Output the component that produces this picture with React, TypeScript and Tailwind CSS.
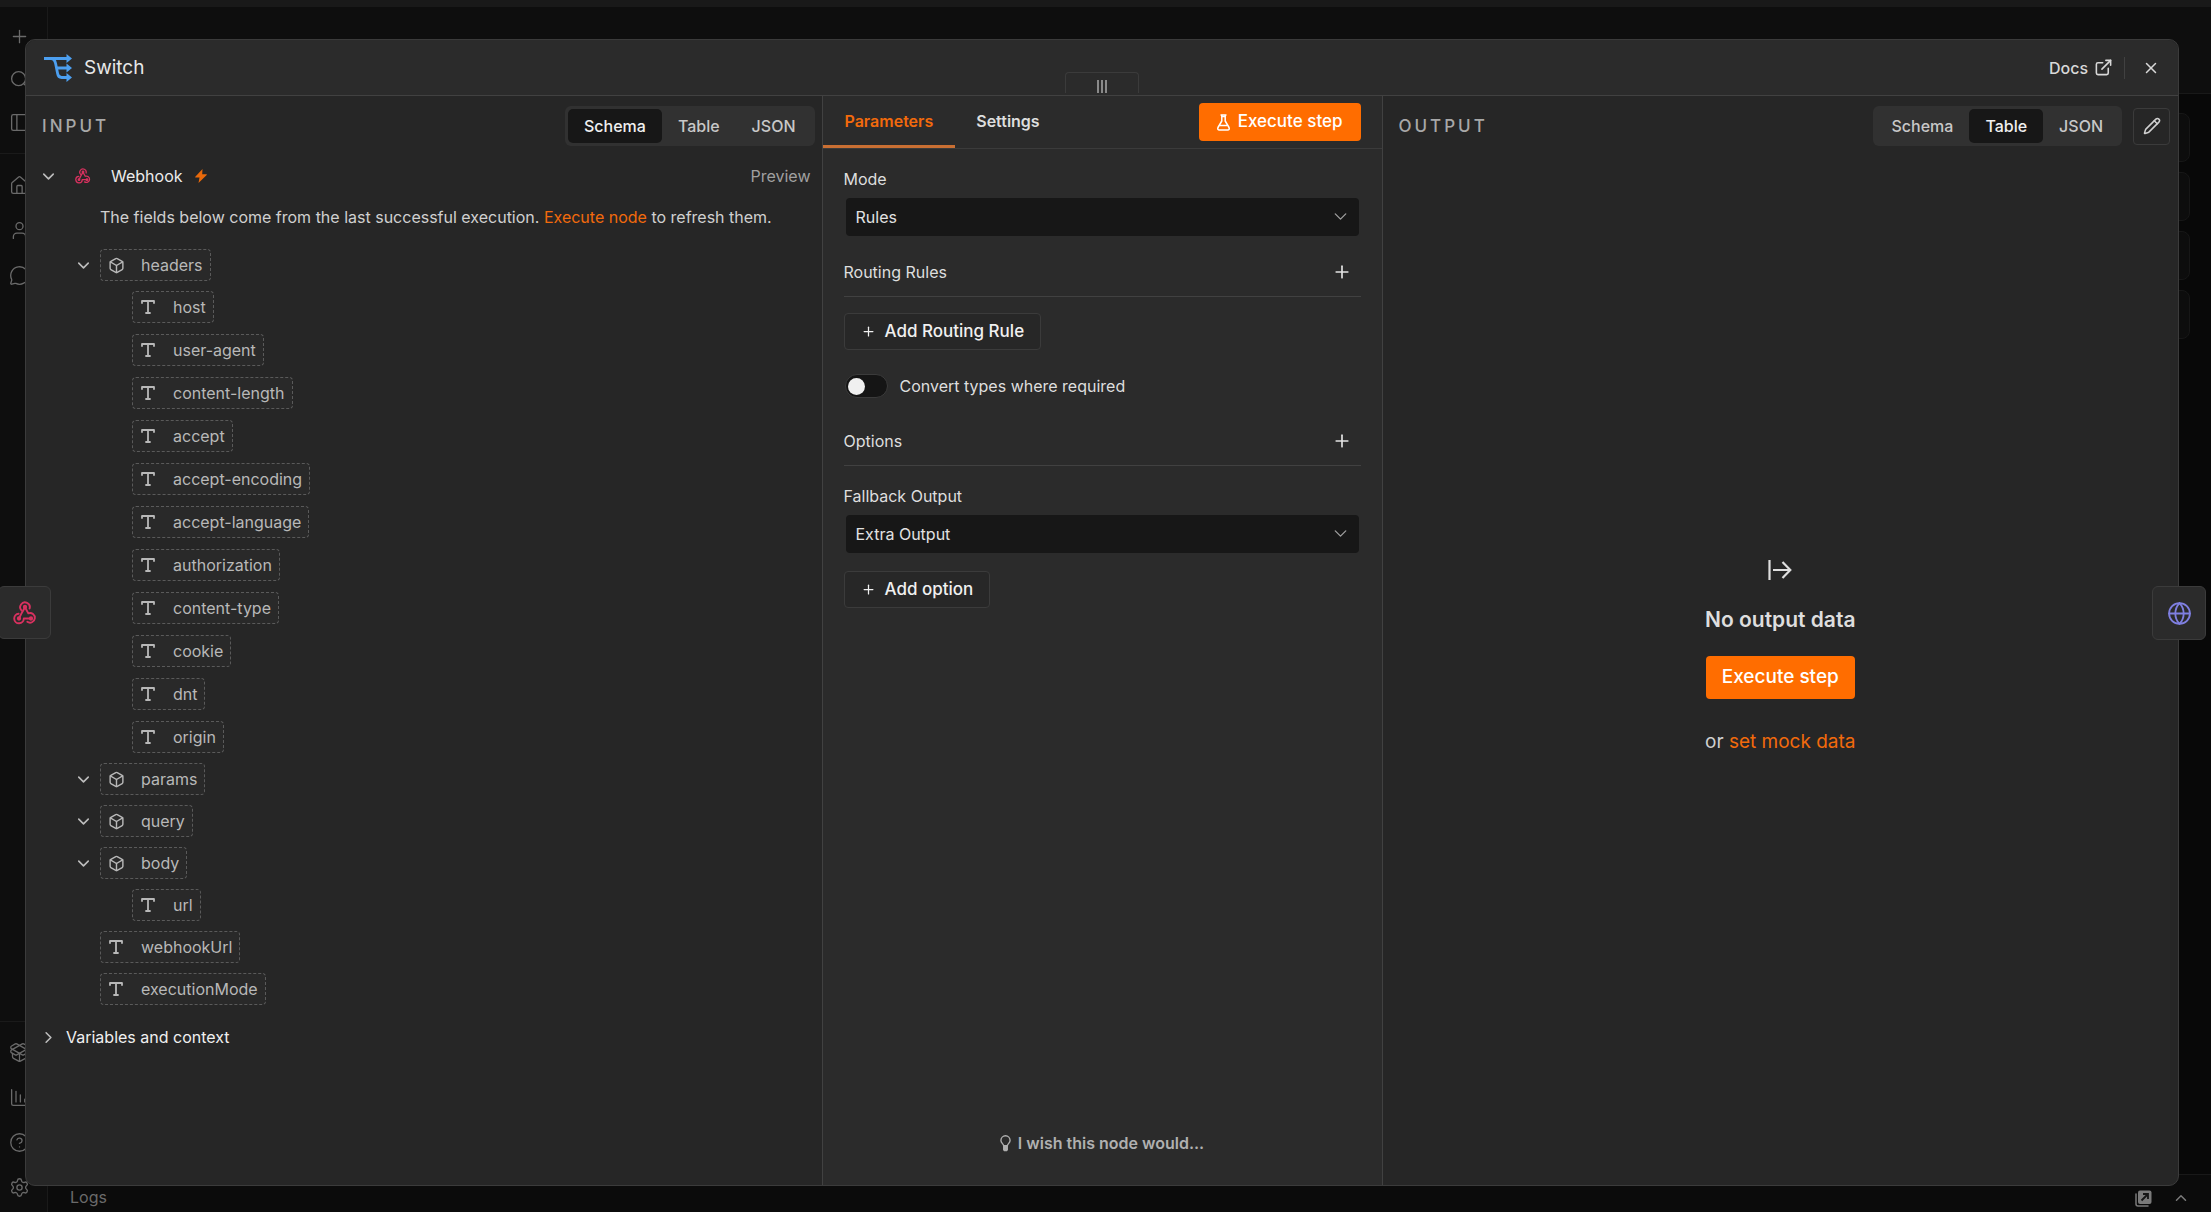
import { useState } from "react";
import type { ReactNode } from "react";
import {
  Box,
  ChartColumnDecreasing,
  ChevronDown,
  ChevronRight,
  ChevronUp,
  CircleQuestionMark,
  ExternalLink,
  Globe,
  House,
  MessageCircle,
  PackageOpen,
  PanelLeft,
  Pencil,
  Plus,
  Search,
  Settings,
  User,
  X,
} from "lucide-react";
import clsx from "clsx";

type View = "Schema" | "Table" | "JSON";

interface SchemaNode {
  name: string;
  type: "object" | "string";
  children?: SchemaNode[];
}

const HEADER_FIELDS = [
  "host",
  "user-agent",
  "content-length",
  "accept",
  "accept-encoding",
  "accept-language",
  "authorization",
  "content-type",
  "cookie",
  "dnt",
  "origin",
];

const SCHEMA: SchemaNode[] = [
  {
    name: "headers",
    type: "object",
    children: HEADER_FIELDS.map((name) => ({ name, type: "string" })),
  },
  { name: "params", type: "object" },
  { name: "query", type: "object" },
  { name: "body", type: "object", children: [{ name: "url", type: "string" }] },
  { name: "webhookUrl", type: "string" },
  { name: "executionMode", type: "string" },
];

function SwitchIcon() {
  return (
    <svg width="28" height="28" viewBox="0 0 28 28" fill="none" aria-hidden="true">
      <path
        d="M0 4.500H24M7 4.500c3 0 4 2 4.600 5l2 10c.5 3 1.500 4 4 4H24M12 14H24"
        stroke="#4c9ff0"
        strokeWidth="2.800"
      />
      <path
        d="M22.500 0 28 4.500 22.500 9zM22.500 9.500 28 14 22.500 18.500zM22.500 19 28 23.500 22.500 28z"
        fill="#4c9ff0"
      />
    </svg>
  );
}

function WebhookIcon({ size }: { size: number }) {
  return (
    <svg
      width={size}
      height={size}
      viewBox="0 0 24 24"
      fill="none"
      stroke="#d8315f"
      strokeWidth="1.900"
      strokeLinecap="round"
      strokeLinejoin="round"
      aria-hidden="true"
    >
      <path d="M8.600 9.600A4.800 4.800 0 1 1 16.600 7.500" />
      <path d="M12 6.200 15.300 12.400A4.800 4.800 0 1 1 14.300 20.800" />
      <path d="M12 6.200 8.600 12.200 6 17.500" />
      <path d="M5.600 12.700A4.800 4.800 0 1 0 10.800 17.500H18" />
      <circle cx="12" cy="6" r="1.200" fill="#d8315f" />
      <circle cx="6" cy="17.500" r="1.200" fill="#d8315f" />
      <circle cx="18" cy="17.500" r="1.200" fill="#d8315f" />
    </svg>
  );
}

function BoltIcon() {
  return (
    <svg width="12" height="14" viewBox="0 0 12 14" fill="#e8690b" aria-hidden="true">
      <path d="M7.500 0 0.300 7.800c-.3.400-.1.800.4.800h3.800L3.500 14l8.200-7.900c.3-.4.100-.8-.4-.8H7.200z" />
    </svg>
  );
}

function FlaskIcon() {
  return (
    <svg
      width="13"
      height="17"
      viewBox="0 0 13 17"
      fill="none"
      stroke="currentColor"
      strokeWidth="1.500"
      strokeLinejoin="round"
      aria-hidden="true"
    >
      <path d="M3.500 1h6M4.800 1v6L1 13.500C.4 15 1 16 2.300 16h8.400c1.300 0 1.900-1 1.300-2.500L8.200 7V1" />
      <path d="M4.800 2.500h3.400M3 11.500h7" />
    </svg>
  );
}

function BulbIcon() {
  return (
    <svg width="11" height="17" viewBox="0 0 12 18" fill="none" aria-hidden="true">
      <path
        d="M4 11.500C4 9.500 1 8.500 1 5.600a5 5 0 0 1 10 0c0 2.900-3 3.900-3 5.900z"
        stroke="currentColor"
        strokeWidth="1.500"
      />
      <path d="M3.300 11.500h5.400v4.500L7.500 17.500h-3L3.300 16z" fill="currentColor" />
    </svg>
  );
}

function TextTypeIcon() {
  return (
    <svg
      width="14"
      height="14"
      viewBox="0 0 14 14"
      fill="none"
      stroke="currentColor"
      strokeWidth="1.800"
      strokeLinecap="round"
      strokeLinejoin="round"
      aria-hidden="true"
    >
      <path d="M1 3V1H13V3M7 1V13M5 13H9" />
    </svg>
  );
}

function OutputIcon() {
  return (
    <svg
      width="24"
      height="20"
      viewBox="0 0 24 20"
      fill="none"
      stroke="#dedede"
      strokeWidth="2.200"
      aria-hidden="true"
    >
      <path d="M1.500 0V20M5 10H22M14.500 2 22.300 10 14.500 18" />
    </svg>
  );
}

function PopOutIcon() {
  return (
    <svg width="17" height="17" viewBox="0 0 17 17" fill="none" aria-hidden="true">
      <path
        d="M1 4v10a2 2 0 0 0 2 2h10"
        stroke="currentColor"
        strokeWidth="1.500"
        strokeLinecap="round"
      />
      <rect x="3" y="0.500" width="13.500" height="13.500" rx="2" fill="currentColor" />
      <path d="M6.500 10.500 12.500 4.500M8 4H13V9" stroke="#161616" strokeWidth="1.800" />
    </svg>
  );
}

function ViewSwitch({ label, initial }: { label: string; initial: View }) {
  const [view, setView] = useState<View>(initial);
  const views: View[] = ["Schema", "Table", "JSON"];

  return (
    <div role="group" aria-label={label} className="flex h-10 rounded-md bg-[#313131] p-[3px]">
      {views.map((item) => (
        <button
          key={item}
          type="button"
          aria-pressed={item === view}
          onClick={() => setView(item)}
          className={clsx(
            "rounded-[5px] px-4 text-base font-medium",
            item === view ? "bg-[#171717] text-[#f0f0f0]" : "text-[#c8c8c8]"
          )}
        >
          {item}
        </button>
      ))}
    </div>
  );
}

function SchemaItem({ node }: { node: SchemaNode }) {
  const [open, setOpen] = useState(true);
  const isObject = node.type === "object";

  return (
    <li>
      <div className="flex items-center">
        {isObject && (
          <button
            type="button"
            aria-label={`Toggle ${node.name}`}
            aria-expanded={open}
            onClick={() => setOpen(!open)}
            className="-ml-[26px] flex w-[26px] text-[#bdbdbd]"
          >
            <ChevronDown size={19} />
          </button>
        )}
        <span className="flex h-8 items-center gap-[17px] rounded border border-dashed border-[#5a5a5a] bg-[#292929] px-[7px] text-base text-[#b8b8b8]">
          <span className="flex w-4 justify-center">
            {isObject ? <Box size={17} className="shrink-0" /> : <TextTypeIcon />}
          </span>
          {node.name}
        </span>
      </div>
      {open && node.children && (
        <ul className="mt-[10px] flex flex-col gap-[11px] pl-8">
          {node.children.map((child) => (
            <SchemaItem key={child.name} node={child} />
          ))}
        </ul>
      )}
    </li>
  );
}

function SelectField({ id, label, value }: { id: string; label: string; value: string }) {
  return (
    <div>
      <label htmlFor={id} className="block text-base leading-6 text-[#dedede]">
        {label}
      </label>
      <div className="relative mt-[7px] px-[2px]">
        <select
          id={id}
          defaultValue={value}
          className="block h-[38px] w-full appearance-none rounded bg-[#171717] pl-[10px] pr-9 text-base text-[#e2e2e2]"
        >
          <option>{value}</option>
        </select>
        <ChevronDown
          size={21}
          strokeWidth={1.5}
          className="pointer-events-none absolute top-2 right-[10px] text-[#a0a0a0]"
        />
      </div>
    </div>
  );
}

function SectionHeading({ title }: { title: string }) {
  return (
    <div className="flex items-center justify-between border-b border-[#414141] pb-3">
      <h3 className="text-base leading-6 text-[#dedede]">{title}</h3>
      <button type="button" aria-label={`Add to ${title}`} className="mr-[9px] text-[#e4e4e4]">
        <Plus size={20} />
      </button>
    </div>
  );
}

function AddButton({ children }: { children: ReactNode }) {
  return (
    <button
      type="button"
      className="flex h-[37px] items-center gap-[9px] rounded border border-[#3b3b3b] bg-[#272727] px-4 text-[17px] font-medium text-[#f0f0f0]"
    >
      <Plus size={15} />
      {children}
    </button>
  );
}

/** Editor chrome that stays dimmed behind the node dialog. */
function Backdrop() {
  return (
    <div className="flex h-full flex-col bg-[#0b0b0b] text-[#6a6a6a]">
      <div className="h-[7px] bg-[#191919]" />
      <div className="flex min-h-0 flex-1">
        <nav
          aria-label="Main"
          className="flex w-12 flex-col justify-between border-r border-[#1a1a1a] bg-[#0e0e0e]"
        >
          <div>
            <div className="flex flex-col gap-[22px] border-b border-[#1a1a1a] pt-[19px] pb-5 pl-[9px]">
              <Plus size={21} strokeWidth={1.5} />
              <Search size={21} strokeWidth={1.5} />
              <PanelLeft size={21} strokeWidth={1.5} />
            </div>
            <div className="flex flex-col gap-6 pt-[21px] pl-[9px]">
              <House size={21} strokeWidth={1.5} />
              <User size={21} strokeWidth={1.5} />
              <MessageCircle size={21} strokeWidth={1.5} />
            </div>
          </div>
          <div className="flex flex-col gap-6 border-t border-[#1a1a1a] pt-5 pb-[14px] pl-[9px]">
            <PackageOpen size={21} strokeWidth={1.5} />
            <ChartColumnDecreasing size={21} strokeWidth={1.5} />
            <CircleQuestionMark size={21} strokeWidth={1.5} />
            <Settings size={21} strokeWidth={1.5} />
          </div>
        </nav>
        <div className="flex min-w-0 flex-1 flex-col">
          <div className="h-[87px] border-b border-[#191919] bg-[#0e0e0e]" />
          <div className="flex flex-1 flex-col items-end gap-[10px] bg-[#080808] pt-[19px] pr-[21px]">
            {[1, 2, 3, 4].map((n) => (
              <div key={n} className="size-[49px] rounded-lg border border-[#171717] bg-[#0d0d0d]" />
            ))}
          </div>
          <div className="flex h-[38px] items-end justify-between border-t border-[#191919] pr-[21px] pb-[3px] pl-[22px]">
            <span className="text-base leading-6">Logs</span>
            <div className="flex items-center gap-5 pb-[2px] text-[#7a7a7a]">
              <PopOutIcon />
              <ChevronUp size={18} />
            </div>
          </div>
        </div>
      </div>
    </div>
  );
}

function InputPanel() {
  return (
    <section aria-label="Input" className="min-w-0 flex-1">
      <div className="flex items-center justify-between pt-[10px] pr-[7px] pl-4">
        <h2 className="pt-[2px] text-[17px] font-medium tracking-[3px] text-[#a8a8a8]">INPUT</h2>
        <ViewSwitch label="Input view" initial="Schema" />
      </div>

      <div className="mt-[18px] flex items-center pr-[11px] pl-[13px] text-[#bdbdbd]">
        <button type="button" aria-label="Toggle Webhook" className="flex w-9">
          <ChevronDown size={19} />
        </button>
        <WebhookIcon size={16} />
        <span className="ml-5 text-base leading-6 text-[#ececec]">Webhook</span>
        <span className="ml-3">
          <BoltIcon />
        </span>
        <span className="ml-auto text-base text-[#a0a0a0]">Preview</span>
      </div>

      <p className="mt-[17px] pl-[74px] text-base leading-6 text-[#d0d0d0]">
        The fields below come from the last successful execution.{" "}
        <a href="#execute" className="text-[#f26a0c]">
          Execute node
        </a>{" "}
        to refresh them.
      </p>

      <ul className="mt-5 flex flex-col gap-[10px] pl-[74px]">
        {SCHEMA.map((node) => (
          <SchemaItem key={node.name} node={node} />
        ))}
      </ul>

      <button
        type="button"
        className="mt-5 ml-[13px] flex items-center gap-2 text-base leading-6 text-[#f0f0f0]"
      >
        <ChevronRight size={19} className="text-[#bdbdbd]" />
        Variables and context
      </button>
    </section>
  );
}

function ParametersPanel() {
  const [convert, setConvert] = useState(false);

  return (
    <section
      aria-label="Parameters"
      className="relative flex w-[561px] shrink-0 flex-col border-x border-[#414141] bg-[#2b2b2b]"
    >
      {/* Drag handle */}
      <div className="absolute -top-6 left-1/2 flex h-[21px] w-[74px] -translate-x-1/2 items-end justify-center gap-[2px] rounded-t border border-b-0 border-[#3b3b3b]">
        <span className="h-[13px] w-[2px] bg-[#8a8a8a]" />
        <span className="h-[13px] w-[2px] bg-[#8a8a8a]" />
        <span className="h-[13px] w-[2px] bg-[#8a8a8a]" />
      </div>

      <div className="flex h-[53px] items-start justify-between border-b border-[#3b3b3b] pr-[21px] text-base font-semibold">
        <div className="flex">
          <button
            type="button"
            className="h-[52px] border-b-[3px] border-[#c96f33] px-[22px] text-[#f26a0c]"
          >
            Parameters
          </button>
          <button type="button" className="h-[52px] px-[21px] pb-[3px] text-[#dedede]">
            Settings
          </button>
        </div>
        <button
          type="button"
          className="mt-[7px] flex h-[38px] items-center gap-2 rounded bg-[#ff6d00] px-[18px] text-[17px] font-medium text-white"
        >
          <FlaskIcon />
          Execute step
        </button>
      </div>

      <div className="flex flex-1 flex-col px-[21px] pt-[18px]">
        <SelectField id="mode" label="Mode" value="Rules" />
        <div className="mt-6">
          <SectionHeading title="Routing Rules" />
        </div>
        <div className="mt-4 flex">
          <AddButton>Add Routing Rule</AddButton>
        </div>
        <label className="mt-6 flex items-center gap-3 pl-px text-base leading-6 text-[#dedede]">
          <input
            type="checkbox"
            checked={convert}
            onChange={(e) => setConvert(e.target.checked)}
            className="peer sr-only"
          />
          <span className="flex h-6 w-[43px] items-center rounded-full border border-[#3b3b3b] bg-[#151515] px-[2px] peer-checked:justify-end">
            <span className="size-[17px] rounded-full bg-[#f0f0f0]" />
          </span>
          Convert types where required
        </label>
        <div className="mt-[31px]">
          <SectionHeading title="Options" />
        </div>
        <div className="mt-[18px]">
          <SelectField id="fallback" label="Fallback Output" value="Extra Output" />
        </div>
        <div className="mt-[18px] flex">
          <AddButton>Add option</AddButton>
        </div>
        <a
          href="#feedback"
          className="mt-auto mb-[30px] flex items-center justify-center gap-[7px] text-base leading-6 font-semibold text-[#b0b0b0]"
        >
          <BulbIcon />
          I wish this node would...
        </a>
      </div>
    </section>
  );
}

function OutputPanel() {
  return (
    <section aria-label="Output" className="flex min-w-0 flex-1 flex-col">
      <div className="flex items-center justify-between pt-[10px] pr-2 pl-4">
        <h2 className="pt-[2px] text-[17px] font-medium tracking-[3px] text-[#a8a8a8]">OUTPUT</h2>
        <div className="flex items-center gap-[11px]">
          <ViewSwitch label="Output view" initial="Table" />
          <button
            type="button"
            aria-label="Edit output"
            className="flex size-[37px] items-center justify-center rounded border border-[#3b3b3b] text-[#d0d0d0]"
          >
            <Pencil size={18} />
          </button>
        </div>
      </div>
      <div className="flex flex-1 flex-col items-center justify-center pb-4 text-[19px] leading-7">
        <OutputIcon />
        <h3 className="mt-[26px] text-[21px] leading-7 font-semibold text-[#dedede]">
          No output data
        </h3>
        <button
          type="button"
          className="mt-[22px] h-[43px] rounded bg-[#ff6d00] px-4 font-medium text-white"
        >
          Execute step
        </button>
        <p className="mt-[29px] text-[#d0d0d0]">
          or{" "}
          <a href="#mock" className="text-[#f26a0c]">
            set mock data
          </a>
        </p>
      </div>
    </section>
  );
}

export default function App() {
  return (
    <div className="relative h-screen overflow-hidden font-['Inter',sans-serif]">
      <Backdrop />

      <div
        role="dialog"
        aria-label="Switch"
        className="absolute top-[39px] right-8 bottom-[26px] left-[25px] flex flex-col rounded-[10px] border border-[#3b3b3b] bg-[#262626]"
      >
        <header className="flex h-14 items-center justify-between rounded-t-[10px] border-b border-[#414141] bg-[#2b2b2b] pr-[18px] pl-[18px]">
          <div className="flex items-center gap-3">
            <SwitchIcon />
            <h1 className="pt-[2px] text-[19px] text-[#e8e8e8]">Switch</h1>
          </div>
          <div className="flex items-center text-[#d8d8d8]">
            <a href="#docs" className="flex items-center gap-[6px] text-base font-medium">
              Docs
              <ExternalLink size={19} />
            </a>
            <span className="ml-[11px] h-[22px] w-px bg-[#414141]" />
            <button type="button" aria-label="Close" className="ml-[17px]">
              <X size={18} />
            </button>
          </div>
        </header>

        <div className="flex min-h-0 flex-1">
          <InputPanel />
          <ParametersPanel />
          <OutputPanel />
        </div>
      </div>

      {/* Neighbouring nodes */}
      <button
        type="button"
        aria-label="Webhook node"
        className="absolute top-[586px] -left-[2px] flex size-[53px] items-center justify-center rounded-md border border-[#3b3b3b] bg-[#2b2b2b]"
      >
        <WebhookIcon size={24} />
      </button>
      <button
        type="button"
        aria-label="HTTP Request node"
        className="absolute top-[586px] right-[5px] flex size-[54px] items-center justify-center rounded-md border border-[#3b3b3b] bg-[#2b2b2b] text-[#7f7fe0]"
      >
        <Globe size={25} strokeWidth={1.75} />
      </button>
    </div>
  );
}
